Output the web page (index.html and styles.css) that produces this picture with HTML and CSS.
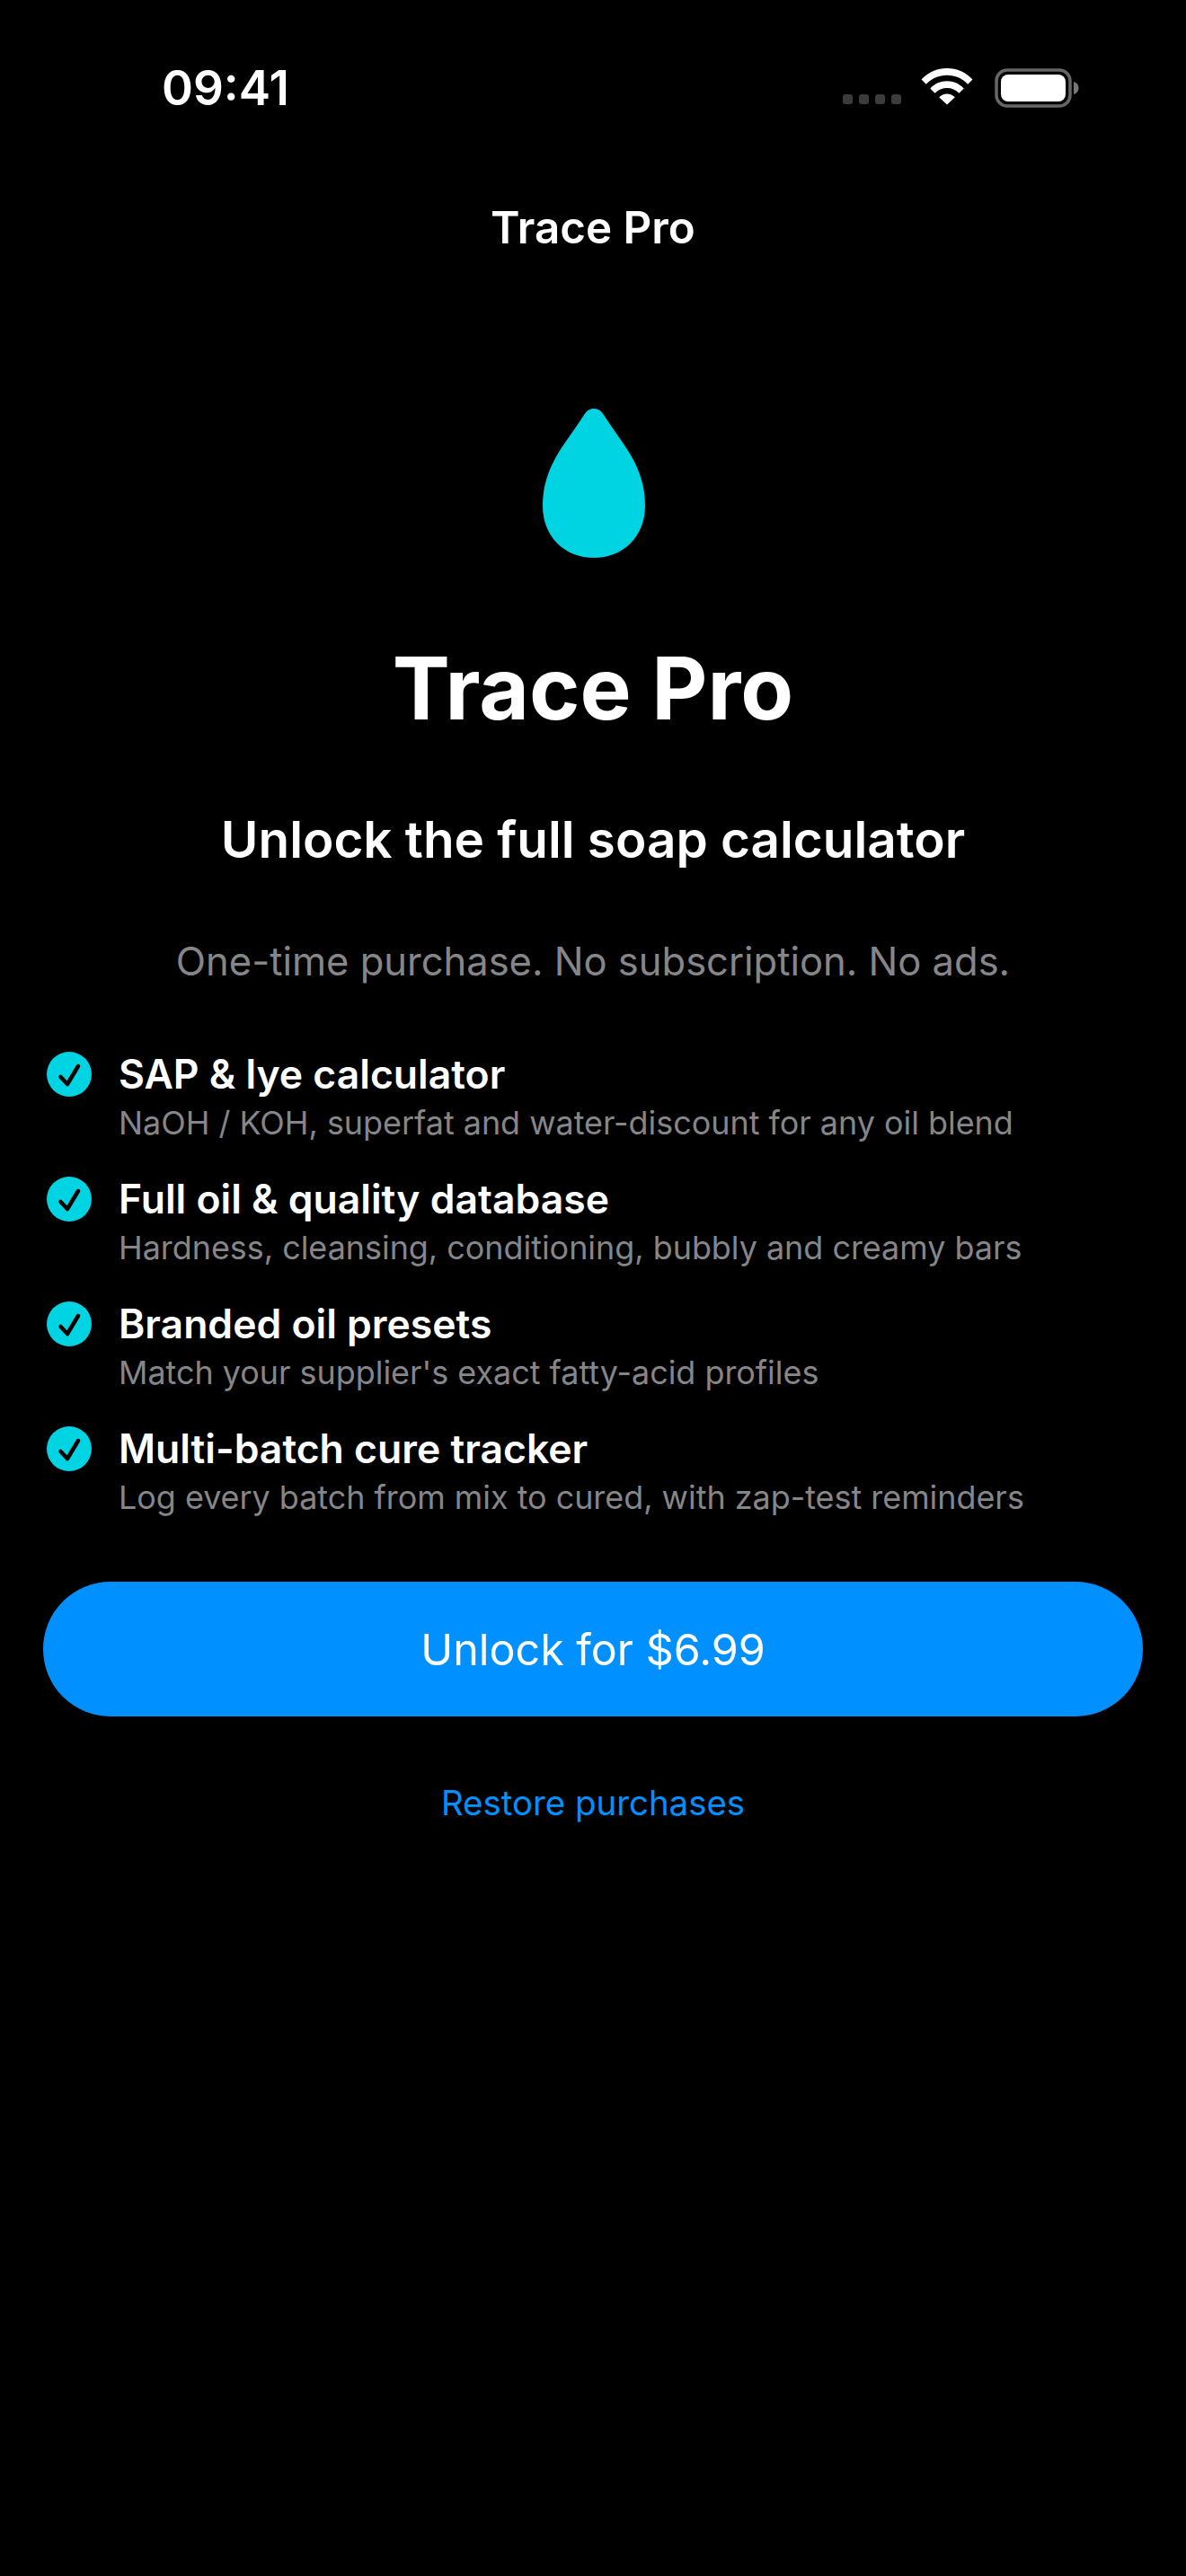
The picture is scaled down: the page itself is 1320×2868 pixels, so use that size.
FILE: index.html
```html
<!DOCTYPE html>
<html lang="en">
<head>
    <meta charset="UTF-8">
    <meta name="viewport" content="width=device-width, initial-scale=1.0">
    <title>Trace Pro</title>
    <link rel="stylesheet" href="styles.css">
</head>
<body>
    <div class="screen">
        <div class="status-bar">
            <span class="time">09:41</span>
            <div class="status-icons">
                <div class="signal">
                    <span class="dot"></span><span class="dot"></span><span class="dot"></span><span class="dot"></span>
                </div>
                <svg class="wifi" width="58" height="42" viewBox="0 0 58 42">
                    <path fill="#fff" d="M0.500 13.500C7.800 5.400 18 1 29 1s21.200 4.400 28.500 12.500L52.200 18.800C46.200 12.300 38 8.700 29 8.700S11.800 12.300 5.800 18.800Z"/>
                    <path fill="#fff" d="M10.300 23.400C15.200 18.100 21.800 15.200 29 15.200s13.800 2.900 18.700 8.200l-5.300 5.300C38.800 24.900 34.100 22.900 29 22.900s-9.800 2-13.400 5.800Z"/>
                    <path fill="#fff" d="M20.200 33.300C22.500 30.900 25.600 29.500 29 29.500s6.500 1.400 8.800 3.800L29 41.500Z"/>
                </svg>
                <svg class="battery" width="94" height="44" viewBox="0 0 94 44">
                    <rect x="2" y="2" width="82" height="40" rx="12" fill="none" stroke="#666" stroke-width="3.500"/>
                    <rect x="7" y="7" width="72" height="30" rx="8" fill="#fff"/>
                    <path fill="#777" d="M88 15c3.500 1 5.500 3.500 5.500 7s-2 6-5.500 7Z"/>
                </svg>
            </div>
        </div>

        <div class="nav-title">Trace Pro</div>

        <div class="hero">
            <svg class="drop" width="114" height="166" viewBox="0 0 114 166">
                <path fill="#00d4e3" d="M57 0C62 0 65 2.500 68 7C76 19.500 87 34 97 50C107 67 114 85 114 108C114 142 90 166 57 166C24 166 0 142 0 108C0 85 7 67 17 50C27 34 38 19.500 46 7C49 2.500 52 0 57 0Z"/>
            </svg>
            <h1>Trace Pro</h1>
            <h2>Unlock the full soap calculator</h2>
            <p class="tagline">One-time purchase. No subscription. No ads.</p>
        </div>

        <ul class="features">
            <li class="feature">
                <svg class="check" width="50" height="50" viewBox="0 0 50 50"><circle cx="25" cy="25" r="25" fill="#00d4e3"/><path d="M15.500 28l7.500 8L35 16" fill="none" stroke="#000" stroke-width="4.500" stroke-linecap="round" stroke-linejoin="round"/></svg>
                <div>
                    <div class="feature-title">SAP &amp; lye calculator</div>
                    <div class="feature-sub">NaOH / KOH, superfat and water-discount for any oil blend</div>
                </div>
            </li>
            <li class="feature">
                <svg class="check" width="50" height="50" viewBox="0 0 50 50"><circle cx="25" cy="25" r="25" fill="#00d4e3"/><path d="M15.500 28l7.500 8L35 16" fill="none" stroke="#000" stroke-width="4.500" stroke-linecap="round" stroke-linejoin="round"/></svg>
                <div>
                    <div class="feature-title">Full oil &amp; quality database</div>
                    <div class="feature-sub">Hardness, cleansing, conditioning, bubbly and creamy bars</div>
                </div>
            </li>
            <li class="feature">
                <svg class="check" width="50" height="50" viewBox="0 0 50 50"><circle cx="25" cy="25" r="25" fill="#00d4e3"/><path d="M15.500 28l7.500 8L35 16" fill="none" stroke="#000" stroke-width="4.500" stroke-linecap="round" stroke-linejoin="round"/></svg>
                <div>
                    <div class="feature-title">Branded oil presets</div>
                    <div class="feature-sub">Match your supplier's exact fatty-acid profiles</div>
                </div>
            </li>
            <li class="feature">
                <svg class="check" width="50" height="50" viewBox="0 0 50 50"><circle cx="25" cy="25" r="25" fill="#00d4e3"/><path d="M15.500 28l7.500 8L35 16" fill="none" stroke="#000" stroke-width="4.500" stroke-linecap="round" stroke-linejoin="round"/></svg>
                <div>
                    <div class="feature-title">Multi-batch cure tracker</div>
                    <div class="feature-sub">Log every batch from mix to cured, with zap-test reminders</div>
                </div>
            </li>
        </ul>

        <button class="unlock">Unlock for $6.99</button>
        <a class="restore" href="#">Restore purchases</a>
    </div>
</body>
</html>
```
FILE: styles.css
```css
* {
    box-sizing: border-box;
}
body {
    margin: 0;
    background-color: #000;
    color: #fff;
    font-family: Inter, "Noto Sans", sans-serif;
}
.screen {
    width: 1320px;
    height: 2868px;
    overflow: hidden;
    display: flex;
    flex-direction: column;
}
.status-bar {
    height: 223px;
    flex: none;
    display: flex;
    justify-content: space-between;
    padding: 66px 119px 0 180px;
}
.time {
    font-size: 53px;
    line-height: 64px;
    font-weight: 600;
}
.status-icons {
    display: flex;
    align-items: flex-start;
}
.signal {
    display: flex;
    gap: 7px;
    margin-top: 39px;
    margin-right: 22px;
}
.dot {
    width: 11px;
    height: 11px;
    border-radius: 3px;
    background-color: #3c3c3c;
}
.wifi {
    margin-top: 9px;
    margin-right: 24px;
}
.battery {
    margin-top: 10px;
}
.nav-title {
    height: 60px;
    line-height: 60px;
    text-align: center;
    font-size: 49.3px;
    font-weight: 600;
}
.hero {
    display: flex;
    flex-direction: column;
    align-items: center;
    text-align: center;
    padding-top: 172px;
}
.drop {
    display: block;
    margin-left: 2px;
}
h1 {
    margin: 89px 0 0;
    font-size: 96px;
    line-height: 112px;
    font-weight: 700;
}
h2 {
    margin: 78px 0 0;
    font-size: 56.6px;
    line-height: 70px;
    font-weight: 600;
}
.tagline {
    margin: 73px 0 0;
    font-size: 43.5px;
    line-height: 54px;
    color: #868689;
}
.features {
    list-style: none;
    margin: 69px 0 0;
    padding: 0 48px 0 52px;
    display: flex;
    flex-direction: column;
    gap: 20px;
}
.feature {
    display: flex;
    align-items: flex-start;
    gap: 30px;
    height: 119px;
}
.check {
    flex: none;
    margin-top: 5px;
}
.feature-title {
    font-size: 44.5px;
    line-height: 60px;
    font-weight: 600;
}
.feature-sub {
    font-size: 35.9px;
    line-height: 48px;
    color: #868689;
}
.unlock {
    display: block;
    width: 1224px;
    height: 150px;
    flex: none;
    margin: 59px 0 0 48px;
    background-color: #0090ff;
    color: #fff;
    border: none;
    border-radius: 75px;
    font-family: inherit;
    font-size: 48.4px;
}
.restore {
    margin-top: 72px;
    text-align: center;
    font-size: 38.4px;
    line-height: 48px;
    color: #0090ff;
    text-decoration: none;
}
```
